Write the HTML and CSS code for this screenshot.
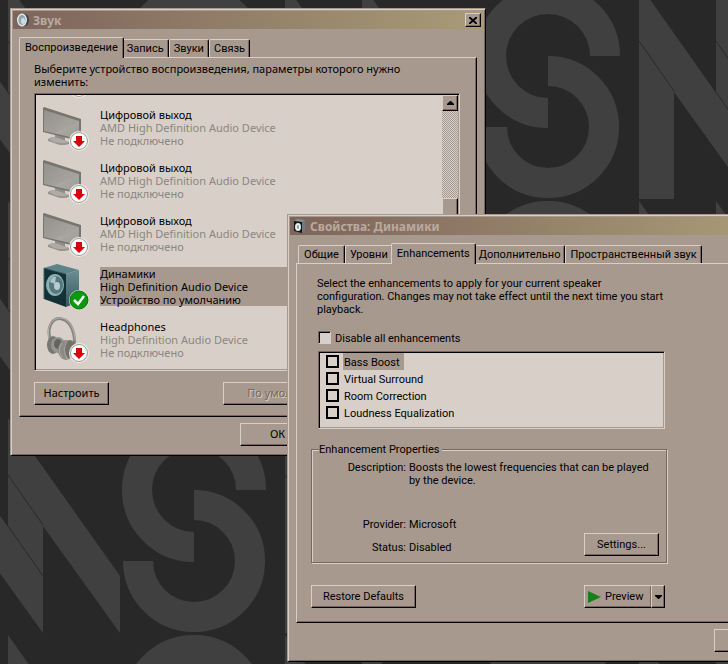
FILE: index.html
```html
<!DOCTYPE html>
<html lang="ru">
<head>
    <meta charset="UTF-8">
    <title>Звук</title>
    <link rel="stylesheet" href="styles.css">
</head>
<body>
    <svg class="wallpaper" aria-hidden="true">
        <defs>
            <pattern id="letters" x="-69" y="-16" width="354" height="217" patternUnits="userSpaceOnUse">
                <!-- double N -->
                <path fill="#404040" d="M0 0 L77 109 V0 L189 158 V215 L112 108 V215 L35 108 V215 H0 Z"/>
                <path stroke="#282828" fill="none" d="M0 57 L35 107 M77 57 L112 107 M77 108 L112 158"/>
                <!-- S -->
                <path stroke="#404040" stroke-width="30" fill="none" d="M320 72 A57 57 0 1 0 263 129 M263 87 A56 56 0 1 1 207 143"/>
            </pattern>
            <linearGradient id="glass" x1="0" y1="0" x2="1" y2="1">
                <stop offset="0" stop-color="#94928c"/>
                <stop offset=".6" stop-color="#a4a29b"/>
                <stop offset="1" stop-color="#93918a"/>
            </linearGradient>
            <linearGradient id="side" x1="0" y1="0" x2="0" y2="1">
                <stop offset="0" stop-color="#6a8e92"/>
                <stop offset="1" stop-color="#37585c"/>
            </linearGradient>
            <symbol id="icon-tv" viewBox="0 0 48 50">
                <path fill="#8f8d87" d="M13 32 L23 35 V40 L13 37 Z"/>
                <path fill="#96948e" d="M6 37 C8 35 13 35 16 36 L27 40 V42 C22 44 16 43 12 41 L6 39 Z"/>
                <path fill="#aeaca5" d="M7 37 C9 35 13 35 16 36 L27 40 C22 42 16 41 12 40 Z"/>
                <path fill="#77756f" d="M1 6 L2 5 L39 17 V38 L37 39 L1 30 Z"/>
                <path fill="url(#glass)" d="M2 8 L37 19 V37 L2 29 Z"/>
                <path fill="#b0aea7" opacity=".4" d="M37 19 V37 L12 31 Z"/>
            </symbol>
            <symbol id="icon-speaker" viewBox="0 0 48 50">
                <path fill="#5d8589" d="M2 7 L15 3 L37 9 L24 13 Z"/>
                <path fill="url(#side)" d="M24 13 L37 9 V41 L24 46 Z"/>
                <path fill="#123236" d="M2 7 L24 13 V46 L2 38 Z"/>
                <path fill="none" stroke="#3f6267" d="M2 38 V7 L24 13"/>
                <ellipse cx="13" cy="24" rx="9" ry="11" fill="#8eb0b5"/>
                <ellipse cx="14" cy="24" rx="7" ry="9" fill="#56777d"/>
                <path fill="#a9c5c9" d="M8 21 Q10 15 14 16 L13 23 Z"/>
                <ellipse cx="15" cy="25" rx="3" ry="4" fill="#b5cdd0"/>
            </symbol>
            <symbol id="icon-headphones" viewBox="0 0 48 50">
                <path fill="none" stroke="#85837e" stroke-width="3" d="M8 25 C4 10 13 3 20 5 C29 7 34 20 32 33"/>
                <path fill="none" stroke="#b6b4ae" d="M7 24 C4 10 12 3 20 4 C28 6 33 17 33 26"/>
                <ellipse cx="11" cy="31" rx="6" ry="9" fill="#797771"/>
                <ellipse cx="16" cy="31" rx="7" ry="8" fill="#96948e"/>
                <ellipse cx="16" cy="30" rx="4" ry="5" fill="#666460"/>
                <ellipse cx="24" cy="36" rx="8" ry="10" fill="#8d8b85"/>
                <ellipse cx="28" cy="35" rx="6" ry="9" fill="#74726d"/>
                <path fill="none" stroke="#aaa8a1" d="M20 29 Q15 36 20 43 M25 27 Q20 35 25 45"/>
            </symbol>
            <symbol id="badge-off" viewBox="0 0 20 20">
                <circle cx="10" cy="10" r="10" fill="#eeece9"/>
                <circle cx="10" cy="10" r="8.5" fill="#fff" stroke="#9c9a98"/>
                <path fill="#d8000c" d="M7 5 H13 V10 H16 L10 16 L4 10 H7 Z"/>
            </symbol>
            <symbol id="badge-ok" viewBox="0 0 20 20">
                <circle cx="10" cy="10" r="10" fill="#eeece9"/>
                <circle cx="10" cy="10" r="9" fill="#0b9a0b" stroke="#087008"/>
                <path fill="none" stroke="#fff" stroke-width="2.5" d="M5 10 L9 14 L15 6"/>
            </symbol>
        </defs>
        <rect width="100%" height="100%" fill="url(#letters)"/>
    </svg>

    <div class="window sound">
        <div class="title-bar">
            <svg class="title-icon" viewBox="0 0 14 14" aria-hidden="true">
                <ellipse cx="9" cy="7" rx="4" ry="6" fill="#3c4347"/>
                <ellipse cx="6" cy="7" rx="5" ry="6.5" fill="#dfe7ea"/>
                <ellipse cx="6" cy="7" rx="3.5" ry="5" fill="#8fa3ad"/>
                <ellipse cx="7" cy="8" rx="2" ry="3" fill="#d3dee2"/>
            </svg>
            <span class="title">Звук</span>
            <button class="close" aria-label="Закрыть">
                <svg viewBox="0 0 8 7"><path fill="none" stroke="#000" stroke-width="2" d="M0 0 L8 7 M8 0 L0 7"/></svg>
            </button>
        </div>
        <div class="tabs" role="tablist">
            <button class="tab active" role="tab">Воспроизведение</button>
            <button class="tab" role="tab">Запись</button>
            <button class="tab" role="tab">Звуки</button>
            <button class="tab" role="tab">Связь</button>
        </div>
        <div class="panel">
            <p class="hint">Выберите устройство воспроизведения, параметры которого нужно изменить:</p>
            <div class="device-box">
                <ul class="devices">
                    <li class="device">
                        <div class="device-icon"><svg class="picture"><use href="#icon-tv"/></svg><svg class="badge"><use href="#badge-off"/></svg></div>
                    </li>
                    <li class="device">
                        <div class="device-icon"><svg class="picture"><use href="#icon-tv"/></svg><svg class="badge"><use href="#badge-off"/></svg></div>
                        <div class="device-text"><b>Цифровой выход</b><span>AMD High Definition Audio Device</span><span>Не подключено</span></div>
                    </li>
                    <li class="device">
                        <div class="device-icon"><svg class="picture"><use href="#icon-tv"/></svg><svg class="badge"><use href="#badge-off"/></svg></div>
                        <div class="device-text"><b>Цифровой выход</b><span>AMD High Definition Audio Device</span><span>Не подключено</span></div>
                    </li>
                    <li class="device">
                        <div class="device-icon"><svg class="picture"><use href="#icon-tv"/></svg><svg class="badge"><use href="#badge-off"/></svg></div>
                        <div class="device-text"><b>Цифровой выход</b><span>AMD High Definition Audio Device</span><span>Не подключено</span></div>
                    </li>
                    <li class="device selected">
                        <div class="device-icon"><svg class="picture"><use href="#icon-speaker"/></svg><svg class="badge"><use href="#badge-ok"/></svg></div>
                        <div class="device-text"><b>Динамики</b><span>High Definition Audio Device</span><span>Устройство по умолчанию</span></div>
                    </li>
                    <li class="device">
                        <div class="device-icon"><svg class="picture"><use href="#icon-headphones"/></svg><svg class="badge"><use href="#badge-off"/></svg></div>
                        <div class="device-text"><b>Headphones</b><span>High Definition Audio Device</span><span>Не подключено</span></div>
                    </li>
                </ul>
                <div class="scrollbar">
                    <button class="scroll-up" aria-label="Вверх"><svg viewBox="0 0 7 4"><path d="M3 0 H4 L7 3 V4 H0 V3 Z"/></svg></button>
                    <div class="scroll-thumb"></div>
                </div>
            </div>
            <div class="row">
                <button class="button">Настроить</button>
                <button class="button default-button" disabled>По умолчанию</button>
            </div>
        </div>
        <div class="footer">
            <button class="button">ОК</button>
        </div>
    </div>

    <div class="window properties">
        <div class="title-bar">
            <svg class="title-icon" viewBox="0 0 14 14" aria-hidden="true">
                <path fill="#6c7b80" d="M9 3 L12 1 V12 L9 14 Z"/>
                <path fill="#879497" d="M1 2 L4 0 L12 1 L9 3 Z"/>
                <path fill="#101718" d="M1 2 L9 3 V14 L1 12 Z"/>
                <ellipse cx="5" cy="8" rx="3" ry="4" fill="#e6eef0"/>
                <ellipse cx="5" cy="8" rx="1" ry="2" fill="#8b999d"/>
            </svg>
            <span class="title">Свойства: Динамики</span>
        </div>
        <div class="tabs" role="tablist">
            <button class="tab" role="tab">Общие</button>
            <button class="tab" role="tab">Уровни</button>
            <button class="tab active" role="tab">Enhancements</button>
            <button class="tab" role="tab">Дополнительно</button>
            <button class="tab" role="tab">Пространственный звук</button>
        </div>
        <div class="panel">
            <p class="intro">Select the enhancements to apply for your current speaker configuration. Changes may not take effect until the next time you start playback.</p>
            <div class="disable-all">
                <input type="checkbox" id="disable-all">
                <label for="disable-all">Disable all enhancements</label>
            </div>
            <ul class="effects">
                <li><input type="checkbox" id="bass"><label class="current" for="bass">Bass Boost</label></li>
                <li><input type="checkbox" id="surround"><label for="surround">Virtual Surround</label></li>
                <li><input type="checkbox" id="room"><label for="room">Room Correction</label></li>
                <li><input type="checkbox" id="loudness"><label for="loudness">Loudness Equalization</label></li>
            </ul>
            <fieldset class="group">
                <legend>Enhancement Properties</legend>
                <dl class="details">
                    <dt>Description:</dt>
                    <dd class="description">Boosts the lowest frequencies that can be played by the device.</dd>
                    <dt>Provider:</dt>
                    <dd>Microsoft</dd>
                    <dt>Status:</dt>
                    <dd>Disabled</dd>
                </dl>
                <button class="button settings">Settings...</button>
            </fieldset>
            <div class="row">
                <button class="button restore">Restore Defaults</button>
                <div class="split">
                    <button class="preview"><svg viewBox="0 0 13 12"><path fill="#188018" d="M0 0 L13 6 L0 12 Z"/></svg>Preview</button>
                    <button class="preview-more" aria-label="More"><svg viewBox="0 0 7 4"><path d="M0 0 H7 V1 L4 4 H3 L0 1 Z"/></svg></button>
                </div>
            </div>
        </div>
        <div class="footer">
            <button class="button" aria-label="OK"></button>
        </div>
    </div>
</body>
</html>
```
FILE: styles.css
```css
:root {
    --face: #a8998f;
    --light: #d8d0c8;
    --shadow: #7b655c;
    --dark: #000;
    --bevel: inset -1px -1px var(--shadow);
}
* {
    box-sizing: border-box;
}
body {
    position: relative;
    margin: 0;
    min-height: 100vh;
    overflow: hidden;
    background-color: #282828;
    color: #000;
    font-family: Roboto, sans-serif;
    font-size: 11px;
    line-height: 13px;
}
p, ul, dl, dd {
    margin: 0;
    padding: 0;
    list-style: none;
}
button {
    padding: 0;
    color: inherit;
    font: inherit;
    background-color: var(--face);
    border: 1px solid;
    border-color: var(--light) var(--dark) var(--dark) var(--light);
    box-shadow: var(--bevel);
    border-radius: 0;
}
.wallpaper {
    position: absolute;
    top: 0;
    left: 0;
    width: 100%;
    height: 100%;
}

/* Windows */
.window {
    position: absolute;
    width: 476px;
    padding: 2px 8px 9px;
    background-color: var(--face);
    border: 1px solid;
    border-color: var(--face) var(--dark) var(--dark) var(--face);
    box-shadow: inset 1px 1px var(--light), var(--bevel);
}
.sound {
    left: 10px;
    top: 8px;
}
.properties {
    left: 287px;
    top: 214px;
}
.title-bar {
    display: flex;
    align-items: center;
    height: 18px;
    margin: 0 -6px 8px;
    padding: 0 2px 0 3px;
    background: linear-gradient(to right, #7e655c, #a89b76);
}
.title-icon {
    width: 14px;
    height: 14px;
    margin-right: 3px;
}
.title {
    flex: 1;
    color: #b9aaa0;
    font-family: "Noto Sans", sans-serif;
    font-size: 12px;
    font-weight: bold;
}
.close {
    display: flex;
    align-items: center;
    justify-content: center;
    width: 16px;
    height: 14px;
}
.close svg {
    width: 8px;
    height: 7px;
}

/* Tabs */
.tabs {
    display: flex;
    align-items: flex-end;
    height: 20px;
    padding-left: 2px;
}
.tab {
    height: 18px;
    padding: 0 4px;
    border-bottom: 0;
    border-radius: 2px 2px 0 0;
    box-shadow: inset -1px 0 var(--shadow);
    white-space: nowrap;
}
.tab.active {
    position: relative;
    height: 21px;
    margin: 0 -2px -1px;
    padding: 0 5px 2px;
}
.panel {
    border: 1px solid;
    border-color: var(--light) var(--dark) var(--dark) var(--light);
    box-shadow: var(--bevel);
}
.row {
    display: flex;
    justify-content: space-between;
}
.button {
    min-width: 75px;
    height: 23px;
}
.button:disabled {
    color: var(--shadow);
    text-shadow: 1px 1px var(--light);
}
.footer {
    display: flex;
    padding-top: 6px;
}

/* Sound window */
.sound .panel,
.sound .footer {
    font-family: "Noto Sans", sans-serif;
}
.sound .panel {
    padding: 4px 16px 11px 14px;
}
.sound .button {
    padding-bottom: 2px;
}
.hint {
    padding-right: 40px;
}
.device-box {
    display: flex;
    height: 278px;
    margin: 5px 0 11px;
    background-color: var(--light);
    border: 1px solid;
    border-color: var(--shadow) var(--light) var(--light) var(--shadow);
    box-shadow: inset 1px 1px var(--dark), inset -1px -1px var(--face);
    padding: 1px;
}
.devices {
    flex: 1;
    padding-left: 6px;
    overflow: hidden;
}
.device {
    display: flex;
    height: 53px;
}
/* list is scrolled down, only the badge of the first row is left */
.device:first-child {
    margin-top: -46px;
}
.device-icon {
    position: relative;
    width: 58px;
}
.picture {
    width: 48px;
    height: 50px;
}
.badge {
    position: absolute;
    left: 27px;
    top: 29px;
    width: 20px;
    height: 20px;
}
.device-text {
    flex: 1;
    align-self: flex-start;
    margin-top: 6px;
    color: #8a8682;
}
.device-text b,
.device-text span {
    display: block;
    font-weight: normal;
}
.device-text b,
.selected .device-text {
    color: #000;
}
.selected .device-text {
    background-color: var(--face);
}
.scrollbar {
    width: 16px;
    background: repeating-conic-gradient(var(--face) 0 25%, var(--light) 0 50%) 0 0 / 2px 2px;
}
.scroll-up {
    display: flex;
    align-items: center;
    justify-content: center;
    width: 16px;
    height: 16px;
}
.scroll-up svg,
.preview-more svg {
    width: 7px;
    height: 4px;
}
.scroll-thumb {
    height: 150px;
    margin-top: 87px;
    background-color: var(--face);
    border: 1px solid;
    border-color: var(--light) var(--dark) var(--dark) var(--light);
    box-shadow: var(--bevel);
}
.default-button {
    min-width: 128px;
    margin-right: 109px;
}
.sound .footer {
    padding-left: 221px;
}

/* Properties window */
.properties .tab {
    min-width: 47px;
}
.properties .panel {
    padding: 13px 14px 14px;
}
.intro {
    width: 360px;
    padding-left: 6px;
}
.disable-all {
    display: flex;
    align-items: center;
    gap: 4px;
    margin: 15px 0 7px 7px;
}
.disable-all label {
    padding-top: 1px;
    margin-bottom: -1px;
}
input[type="checkbox"] {
    appearance: none;
    width: 13px;
    height: 13px;
    margin: 0;
    background-color: var(--light);
    border: 1px solid;
    border-color: var(--shadow) var(--light) var(--light) var(--shadow);
    box-shadow: inset 1px 1px var(--dark);
}
.effects {
    width: 347px;
    height: 78px;
    margin-left: 7px;
    padding: 1px 7px;
    background-color: var(--light);
    border: 1px solid;
    border-color: var(--shadow) var(--light) var(--light) var(--shadow);
    box-shadow: inset 1px 1px var(--dark), inset -1px -1px var(--face);
}
.effects li {
    display: flex;
    align-items: center;
    gap: 4px;
    height: 17px;
}
.effects input[type="checkbox"] {
    border: 2px solid var(--dark);
    box-shadow: none;
}
.effects label {
    padding: 3px 4px 1px 1px;
}
.effects .current {
    background-color: var(--face);
}
.group {
    width: 356px;
    height: 120px;
    margin: 14px 0 22px;
    padding: 5px 7px 0;
    border: 1px solid var(--shadow);
    box-shadow: 1px 1px var(--light), inset 1px 1px var(--light);
}
.group legend {
    padding: 0 2px 0 0;
    background-color: var(--face);
}
.details {
    display: grid;
    grid-template-columns: 87px 245px;
    column-gap: 3px;
    row-gap: 10px;
}
.details dt {
    text-align: right;
}
.description {
    height: 47px;
}
.settings {
    display: block;
    margin: -21px 0 0 auto;
}
.properties .row {
    width: 354px;
}
.restore {
    min-width: 105px;
}
.split {
    display: flex;
    width: 81px;
    height: 23px;
}
.preview {
    display: flex;
    flex: 1;
    align-items: center;
    gap: 4px;
    padding-left: 3px;
    border-right: 0;
}
.preview svg {
    width: 13px;
    height: 12px;
}
.preview-more {
    display: flex;
    align-items: center;
    justify-content: center;
    width: 14px;
}
.properties .footer {
    padding-left: 418px;
}
.properties .footer .button {
    flex: none;
}
```
